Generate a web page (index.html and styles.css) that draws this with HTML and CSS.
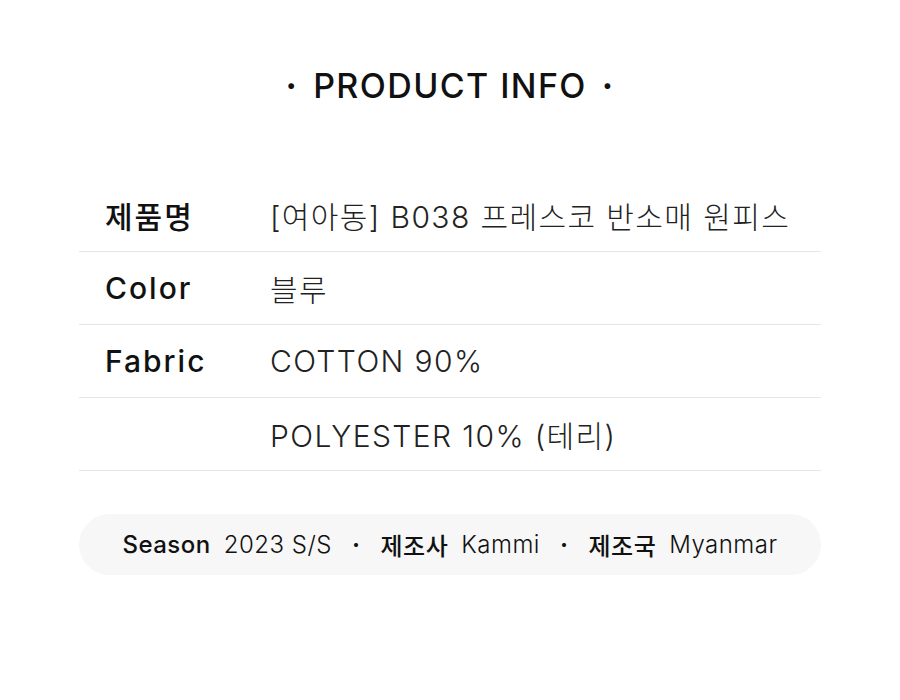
FILE: index.html
```html
<!DOCTYPE html>
<html lang="ko">
<head>
<meta charset="utf-8">
<link rel="stylesheet" href="styles.css">
</head>
<body>
<main class="page">
  <h1 class="title"><span class="dot">·</span>PRODUCT INFO<span class="dot">·</span></h1>
  <div class="table">
    <div class="row"><div class="label">제품명</div><div class="value">[여아동] B038 프레스코 반소매 원피스</div></div>
    <div class="row"><div class="label">Color</div><div class="value">블루</div></div>
    <div class="row"><div class="label">Fabric</div><div class="value">COTTON 90%</div></div>
    <div class="row"><div class="label"></div><div class="value">POLYESTER 10% (테리)</div></div>
  </div>
  <div class="pill">
    <span class="k">Season</span><span class="v">2023 S/S</span>
    <span class="sep">·</span>
    <span class="k">제조사</span><span class="v">Kammi</span>
    <span class="sep">·</span>
    <span class="k">제조국</span><span class="v">Myanmar</span>
  </div>
</main>
</body>
</html>
```
FILE: styles.css
```css
html, body {
  margin: 0;
  padding: 0;
  background: #ffffff;
}
body {
  font-family: Inter, "Noto Sans CJK KR", sans-serif;
  color: #111;
}
.page {
  width: 742px;
  margin: 0 auto;
  padding-top: 64px;
}
.title {
  margin: 0;
  text-align: center;
  font-size: 34px;
  font-weight: 500;
  letter-spacing: 1.4px;
  line-height: 44px;
  display: flex;
  justify-content: center;
  align-items: center;
  gap: 15px;
}
.dot {
  font-weight: 700;
}
.table {
  margin-top: 71px;
}
.row {
  display: flex;
  align-items: center;
  height: 72px;
  border-bottom: 1px solid #e6e6e6;
}
.label {
  width: 165px;
  padding-left: 26px;
  font-size: 30px;
  font-weight: 500;
  letter-spacing: 2px;
  color: #111;
}
.value {
  font-size: 30px;
  font-weight: 300;
  letter-spacing: 1.4px;
  color: #222;
}
.pill {
  margin-top: 43px;
  height: 61px;
  border-radius: 31px;
  background: #f7f7f7;
  display: flex;
  align-items: center;
  justify-content: center;
  font-size: 24px;
  letter-spacing: 0.5px;
}
.k {
  font-weight: 500;
  margin-right: 13px;
}
.v {
  font-weight: 300;
}
.sep {
  margin: 0 20px;
  font-weight: 700;
}
```
